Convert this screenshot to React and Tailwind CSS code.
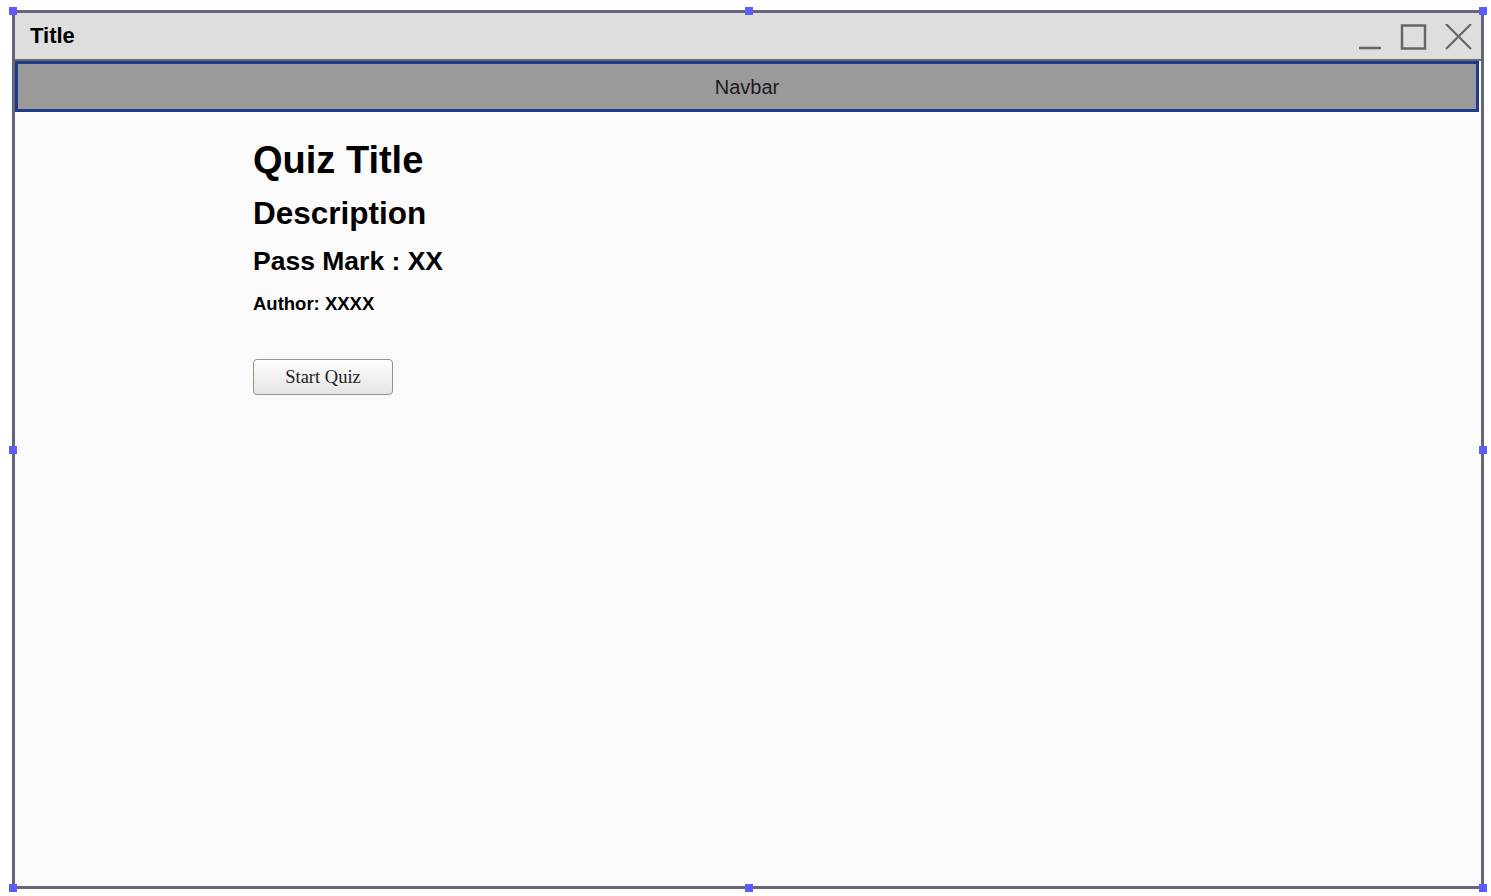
const handleSpots = [
  "-left-[6px] -top-[6px]",
  "left-[730px] -top-[6px]",
  "-right-[6px] -top-[6px]",
  "-left-[6px] top-[433px]",
  "-right-[6px] top-[433px]",
  "-left-[6px] -bottom-[6px]",
  "left-[730px] -bottom-[6px]",
  "-right-[6px] -bottom-[6px]",
];

const WindowControls = () => (
  <svg width="116" height="30" viewBox="0 0 116 30" className="mr-[6px] mt-[6px]">
    {/* minimise */}
    <line x1="0" y1="24" x2="22" y2="24" stroke="#666" strokeWidth="2.5" />
    {/* maximise */}
    <rect x="43" y="1.5" width="23" height="23" fill="none" stroke="#666" strokeWidth="2.5" />
    {/* close */}
    <line x1="87" y1="0" x2="112" y2="25" stroke="#666" strokeWidth="2.2" />
    <line x1="112" y1="0" x2="87" y2="25" stroke="#666" strokeWidth="2.2" />
  </svg>
);

export default function App() {
  return (
    <div className="min-h-[896px] bg-white pl-[12px] pt-[10px] font-['Liberation_Sans',Arial,sans-serif]">
      <div className="relative flex h-[879px] w-[1472px] flex-col border-[3px] border-[#64647a] bg-[#fafafa]">
        <div className="flex h-[48px] items-center justify-between border-b-2 border-[#6b6b6b] bg-[#dedede]">
          <span className="ml-[15px] mt-[-2px] text-[22px] font-bold text-black">Title</span>
          <WindowControls />
        </div>

        <div className="mr-[2px] flex h-[51px] items-center justify-center border-[3px] border-[#1f3a8a] bg-[#9a9a9a]">
          <span className="text-[20px] text-[#1a1a1a]">Navbar</span>
        </div>

        <main className="flex flex-col items-start pl-[238px] pt-[26px] text-black">
          <h1 className="text-[38px] font-bold leading-[44px]">Quiz Title</h1>
          <h2 className="mt-[12px] text-[31.5px] font-bold leading-[38px]">Description</h2>
          <h3 className="mt-[13px] text-[26.5px] font-bold leading-[32px]">Pass Mark : XX</h3>
          <p className="mt-[16px] text-[18.5px] font-bold leading-[22px]">Author: XXXX</p>
          <button
            type="button"
            className="mt-[44px] h-[36px] w-[140px] rounded-[4px] border border-[#9c9383] bg-gradient-to-b from-white to-[#e4e4e4] pt-[1px] font-['Liberation_Serif','Times_New_Roman',serif] text-[18.5px] text-[#222]"
          >
            Start Quiz
          </button>
        </main>

        {handleSpots.map((spot) => (
          <span key={spot} className={`absolute h-[8px] w-[8px] bg-[#5c5cff] ${spot}`} />
        ))}
      </div>
    </div>
  );
}
